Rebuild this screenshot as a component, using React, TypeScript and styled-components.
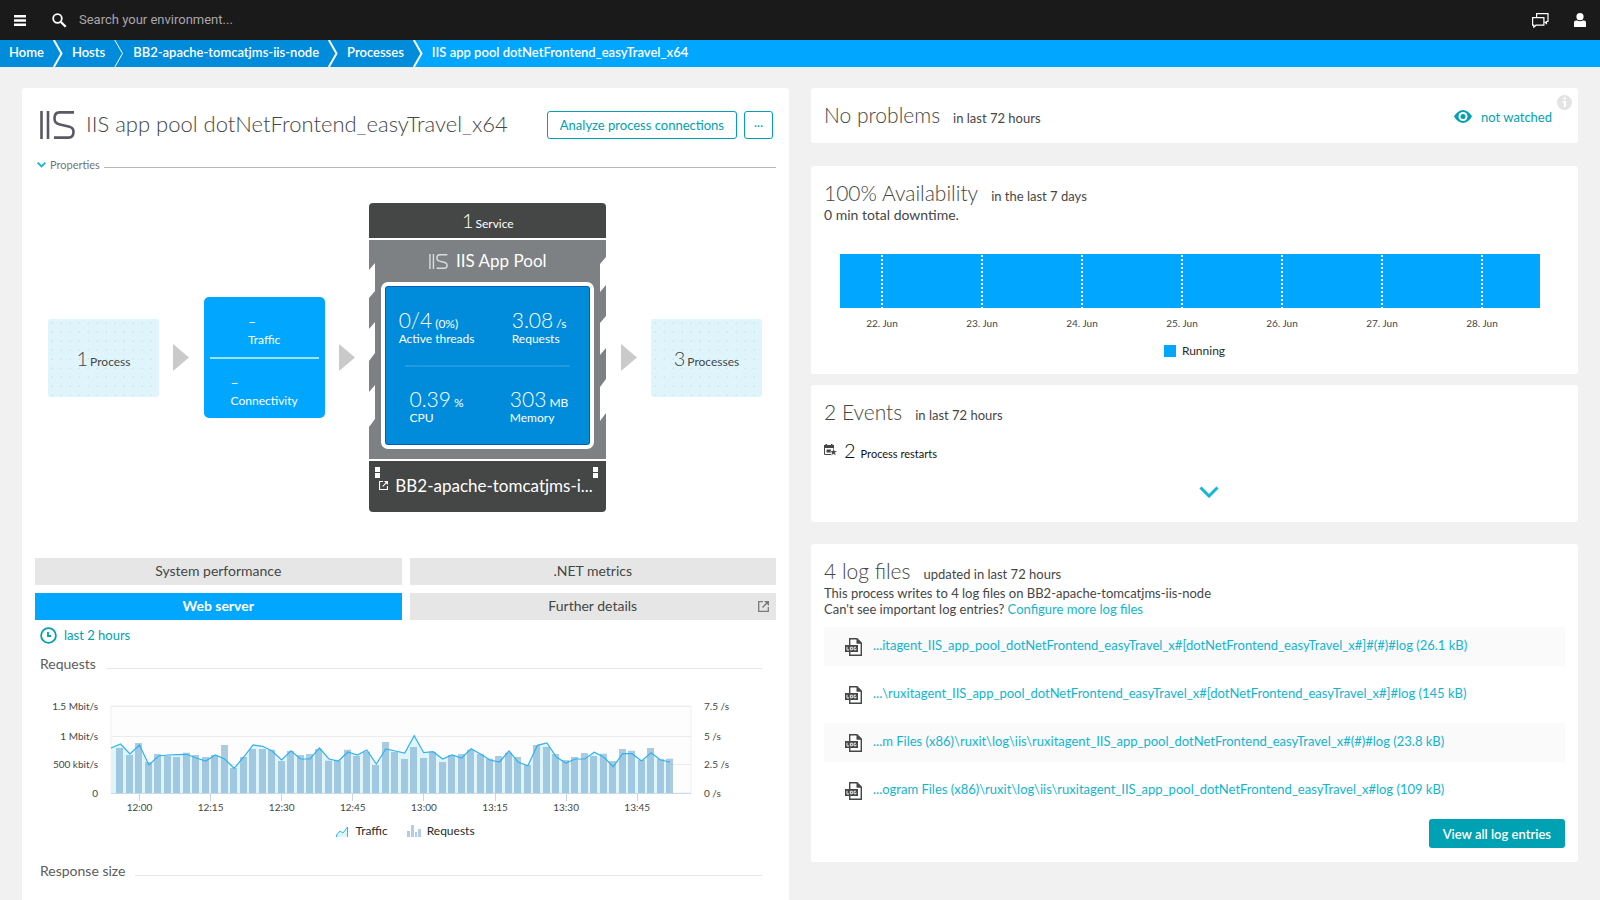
import React from "react";
import styled, { createGlobalStyle } from "styled-components";

const c = {
  ink: "#454646",
  blue: "#00a6ff",
  deep: "#008cdb",
  teal: "#00a1b2",
  link: "#12b4cf",
  line: "#e6e6e6",
  pale: "#e0f4fc",
  page: "#f1f1f1",
};

const GlobalStyle = createGlobalStyle`
  *, *::before, *::after { box-sizing: border-box; }
  html { scrollbar-width: none; }
  body {
    margin: 0;
    background: ${c.page};
    color: ${c.ink};
    font-family: Lato, "Open Sans", sans-serif;
    font-size: 13px;
    line-height: 16px;
  }
  button, input { font: inherit; color: inherit; }
  button { cursor: pointer; padding: 0; border: 0; background: none; }
  a { color: inherit; text-decoration: none; }
  h1, h2, h3, p, ul, ol, dl, dd { margin: 0; padding: 0; font-weight: 400; }
  ul, ol { list-style: none; }
  svg { display: block; flex: none; }
`;

/* ---------- Top bar ---------- */

const TopBar = styled.header`
  display: flex;
  align-items: center;
  height: 40px;
  padding: 0 14px;
  background: #1a1a1a;
  color: #fff;
`;

const SearchBox = styled.label`
  display: flex;
  flex: 1;
  align-items: center;
  gap: 12px;
  margin-left: 26px;
`;

const SearchInput = styled.input`
  flex: 1;
  padding: 0;
  border: 0;
  outline: 0;
  background: none;
  font-family: Roboto, sans-serif;
  font-size: 13px;
  &::placeholder { color: #aaa5aa; opacity: 1; }
`;

const BarActions = styled.div`
  display: flex;
  align-items: center;
  gap: 25px;
`;

/* ---------- Breadcrumbs ---------- */

const Crumbs = styled.ol`
  display: flex;
  height: 27px;
  background: ${c.blue};
  color: #fff;
  font-weight: 600;
`;

const Crumb = styled.li<{ $current?: boolean }>`
  display: flex;
  align-items: center;
  gap: 9px;
  padding-left: 9px;
  background: ${(p) => (p.$current ? c.blue : c.deep)};
  a { padding-bottom: 3px; }
`;

/* ---------- Page and cards ---------- */

const Page = styled.main`
  display: grid;
  grid-template-columns: minmax(0, 1fr) minmax(0, 1fr);
  gap: 22px;
  padding: 21px 22px;
`;

const MainCard = styled.section`
  padding: 23px 13px 40px;
  border-radius: 3px;
  background: #fff;
`;

const Side = styled.div``;

const Card = styled.section<{ $gap?: number }>`
  position: relative;
  margin-bottom: ${(p) => p.$gap ?? 0}px;
  padding: 14px 13px;
  border-radius: 3px;
  background: #fff;
`;

const CardHead = styled.div`
  display: flex;
  align-items: baseline;
  gap: 13px;
  height: 27px;
  line-height: 26px;
`;

const CardTitle = styled.h2`
  font-size: 21px;
  font-weight: 300;
`;

const CardNote = styled.p`
  font-size: 14px;
`;

const TitleRow = styled.div`
  display: flex;
  align-items: center;
  height: 28px;
  padding: 0 3px 0 5px;
  gap: 7px;
`;

const PageTitle = styled.h1`
  flex: 1;
  margin-left: 4px;
  padding-bottom: 3px;
  font-size: 22px;
  font-weight: 300;
  line-height: 28px;
  white-space: nowrap;
`;

const OutlineButton = styled.button`
  height: 28px;
  min-width: 29px;
  padding: 0 12px;
  border: 1px solid ${c.teal};
  border-radius: 3px;
  color: ${c.teal};
  &:last-child { padding: 0 0 6px; }
`;

const Properties = styled.button`
  display: flex;
  width: 100%;
  align-items: center;
  gap: 4px;
  margin-top: 18px;
  padding-left: 2px;
  font-size: 11px;
  line-height: 16px;
  color: #757575;
`;

const Rule = styled.span`
  flex: 1;
  height: 1px;
  background: #b7b7b7;
  ${Properties} & { margin-top: 4px; }
`;

/* ---------- Process diagram ---------- */

const Diagram = styled.div`
  display: flex;
  align-items: center;
  justify-content: space-between;
  padding: 0 14px 0 13px;
  margin: 30px 0 46px;
`;

const Neighbour = styled.button`
  display: flex;
  align-items: baseline;
  justify-content: center;
  gap: 2px;
  width: 111px;
  height: 78px;
  padding-top: 27px;
  border-radius: 3px;
  background: radial-gradient(circle, #d0e9f3 1px, transparent 1px) 0 0 / 9px 9px ${c.pale};
  font-size: 12px;
`;

const Count = styled.span`
  font-size: 20px;
  font-weight: 300;
  line-height: 24px;
`;

const LinkBox = styled.div`
  display: flex;
  flex-direction: column;
  width: 121px;
  height: 121px;
  padding: 0 6px;
  border-radius: 5px;
  background: ${c.blue};
  color: #fff;
  font-size: 12px;
`;

const LinkHalf = styled.div`
  display: flex;
  flex: 1;
  flex-direction: column;
  justify-content: center;
  align-items: center;
  padding-top: 6px;
  & + & { border-top: 2px solid #99e3fb; }
  dl { line-height: 16px; }
  dt { line-height: 20px; font-size: 14px; }
`;

const Chip = styled.div`
  display: flex;
  flex-direction: column;
  gap: 2px;
  width: 237px;
  color: #fff;
`;

const ChipTop = styled.button`
  display: flex;
  align-items: baseline;
  justify-content: center;
  gap: 2px;
  height: 35px;
  padding-top: 5px;
  border-radius: 4px 4px 0 0;
  background: ${c.ink};
  color: #fff;
  font-size: 12px;
`;

const ChipBody = styled.div`
  position: relative;
  height: 219px;
  padding: 0 12px;
  background: #7d8183;
`;

const Notches = styled.svg`
  position: absolute;
  inset: 0;
`;

const ChipName = styled.h3`
  display: flex;
  align-items: center;
  justify-content: center;
  gap: 8px;
  height: 42px;
  font-size: 17px;
`;

const Screen = styled.div`
  display: grid;
  grid-template-columns: 1fr 1fr;
  grid-template-rows: 79px 79px;
  justify-items: center;
  height: 167px;
  border: 4px solid #fff;
  border-radius: 7px;
  background: ${c.deep};
  box-shadow: inset 0 0 0 1px #0a5db0;
`;

const Metric = styled.dl`
  display: flex;
  flex-direction: column-reverse;
  justify-content: flex-end;
  padding-top: 25px;
  font-size: 12px;
  dd { line-height: 18px; }
  dt { line-height: 11px; }
  strong { font-size: 21px; font-weight: 300; }
`;

const ScreenRule = styled.span`
  position: absolute;
  left: 36px;
  right: 36px;
  top: 125px;
  height: 2px;
  background: #1f9be3;
`;

const ChipBottom = styled.div`
  position: relative;
  display: flex;
  align-items: center;
  gap: 7px;
  height: 51px;
  padding: 0 8px 2px 10px;
  border-radius: 0 0 4px 4px;
  background: ${c.ink};
  font-size: 17px;
  line-height: 22px;
  white-space: nowrap;
`;

const Pins = styled.span<{ $side: "left" | "right" }>`
  position: absolute;
  top: 6px;
  ${(p) => p.$side}: ${(p) => (p.$side === "left" ? 6 : 8)}px;
  width: 5px;
  height: 11px;
  border: solid #fff;
  border-width: 5px 0;
`;

/* ---------- Tabs and charts ---------- */

const Tabs = styled.div`
  display: grid;
  grid-template-columns: 1fr 1fr;
  gap: 8px;
`;

const Tab = styled.button<{ $active?: boolean }>`
  position: relative;
  height: 27px;
  padding-bottom: 2px;
  background: ${(p) => (p.$active ? c.blue : c.line)};
  color: ${(p) => (p.$active ? "#fff" : c.ink)};
  font-size: 14px;
  font-weight: ${(p) => (p.$active ? 700 : 400)};
  svg { position: absolute; right: 7px; top: 8px; }
`;

const Timeframe = styled.button`
  display: flex;
  align-items: center;
  gap: 7px;
  height: 26px;
  margin: 2px 0 0 5px;
  color: ${c.teal};
`;

const SectionHead = styled.div<{ $top: number }>`
  display: flex;
  align-items: flex-end;
  gap: 10px;
  margin: ${(p) => p.$top}px 14px 0 5px;
  line-height: 18px;
  h3 { font-size: 14px; color: #5c5c5c; }
  ${Rule} { margin-bottom: 4px; background: ${c.line}; }
`;

const ChartSvg = styled.svg`
  width: 100%;
  height: auto;
  margin-top: 7px;
  font-size: 10px;
  fill: ${c.ink};
`;

const Legend = styled.ul`
  display: flex;
  align-items: center;
  justify-content: center;
  gap: 19px;
  height: 18px;
  margin-top: 2px;
  font-size: 12px;
  color: #2b2b2b;
  li { display: flex; align-items: center; gap: 6px; }
`;

/* ---------- Side cards ---------- */

const Watch = styled.button`
  display: flex;
  align-items: center;
  gap: 9px;
  margin-left: auto;
  margin-right: 13px;
  color: ${c.teal};
`;

const Info = styled.button`
  position: absolute;
  top: 7px;
  right: 6px;
`;

const Timeline = styled.svg`
  width: 100%;
  height: auto;
  margin-top: 31px;
  font-size: 10px;
  fill: ${c.ink};
`;

const Swatch = styled.span`
  width: 12px;
  height: 12px;
  background: ${c.blue};
`;

const EventRow = styled.p`
  display: flex;
  align-items: baseline;
  gap: 5px;
  height: 24px;
  margin-top: 12px;
  font-size: 11px;
  line-height: 24px;
  color: #111;
  svg { margin-right: 2px; align-self: center; }
`;

const Expand = styled.button`
  display: block;
  margin: 22px auto 8px;
  padding: 2px 0 2px 28px;
`;

const TextLink = styled.a`
  color: ${c.link};
`;

const LogList = styled.ul`
  display: grid;
  gap: 9px;
  margin: 10px 0 9px;
`;

const LogItem = styled.li`
  display: flex;
  align-items: center;
  gap: 10px;
  height: 39px;
  padding: 0 21px;
  white-space: nowrap;
  &:nth-child(odd) { background: #fafafa; }
  a { padding-bottom: 3px; }
`;

const SolidButton = styled.button`
  display: block;
  height: 29px;
  margin-left: auto;
  padding: 0 14px;
  border-radius: 3px;
  background: ${c.teal};
  color: #fff;
  font-weight: 600;
`;

/* ---------- Icons ---------- */

const IisLogo = ({ width, height, color }: { width: number; height: number; color: string }) => (
  <svg width={width} height={height} viewBox="0 0 35 28" fill="none" stroke={color} strokeWidth="2.6" aria-hidden="true">
    <path d="M1.5 0V28M8 0V28" />
    <path d="M34 1.4H19.5C15.5 1.4 14.5 4 14.5 7.5S16 12.5 19 13.2L29.500 15.800C32.500 16.600 33.500 18 33.500 20.800C33.500 24.500 32.500 26.600 28.500 26.600H14" />
  </svg>
);

const External = ({ size, color }: { size: number; color: string }) => (
  <svg width={size} height={size} viewBox="0 0 11 11" fill="none" stroke={color} aria-hidden="true">
    <path d="M5 .7H.7V10.300H10.300V6" strokeWidth="1.300" />
    <path d="M4.500 6.500L9 2" strokeWidth="1.500" />
    <path d="M6 0H11V5Z" fill={color} stroke="none" />
  </svg>
);

const Arrow = () => (
  <svg width="16" height="27" aria-hidden="true">
    <path d="M0 0L16 13.500L0 27Z" fill="#cacaca" />
  </svg>
);

const ChevronDown = ({ width, stroke }: { width: number; stroke: number }) => (
  <svg width={width} height={width * 0.6} viewBox="0 0 20 12" fill="none" aria-hidden="true">
    <path d="M1.500 1.500L10 10L18.500 1.500" stroke="#12b9d3" strokeWidth={stroke} />
  </svg>
);

const Separator = ({ bold, last }: { bold?: boolean; last?: boolean }) => (
  <svg width="10" height="27" viewBox="0 0 10 27" fill="none" aria-hidden="true">
    {last && <path d="M0 0H10V27H0L8 13.500Z" fill={c.blue} />}
    <path d="M.800 0L8.500 13.500L.800 27" stroke="#fff" strokeWidth={bold ? 2 : 1} />
  </svg>
);

const LogIcon = () => (
  <svg width="18" height="18" viewBox="0 0 18 18" aria-hidden="true">
    <path d="M4.700 7V.800H12L16.300 5V17.200H4.700V14" fill="#fff" stroke={c.ink} strokeWidth="1.400" />
    <path d="M11.500 .500L16.800 5.700H11.500Z" fill={c.ink} />
    <rect y="7" width="13" height="7" fill={c.ink} />
    <path d="M2 8.700V12H4M5.300 9.200H7.300V11.800H5.300ZM11 9.200H9V11.800H11V10.600" fill="none" stroke="#fff" strokeWidth=".900" />
  </svg>
);

/* ---------- Data ---------- */

const X0 = 76;
const STEP = 9.475;
const BASE = 113;

// Heights above the chart's zero line, one per two minutes
const traffic = [
  45, 49, 39, 48, 28, 37, 38, 38.3, 38.7, 35, 32, 38, 34, 24.7, 36, 48, 46.7, 42, 33, 42.3, 34, 34, 45, 34, 32, 41, 38, 43,
  29, 44, 42, 40, 57.3, 40.3, 41.3, 34, 38, 35, 44.3, 39, 33, 31, 42, 30.7, 27.3, 47.7, 50, 36, 30, 34, 34, 40.7, 36, 26.3,
  39.3, 39.3, 32, 40.3, 33, 31,
];
const requests = [
  45, 38, 50, 31, 39, 37, 36, 40.3, 38, 36, 38, 48, 25, 36, 44, 44, 43.3, 32, 42, 38, 39, 44, 32.3, 32.3, 43.3, 37, 41.3,
  28, 51, 41, 34, 46, 35, 41, 31, 38, 39, 43.3, 39, 34.3, 37, 40.3, 36, 28, 48, 46, 39, 33, 36, 40, 37, 39.3, 32, 44, 42.3,
  33, 45, 34, 34.3,
];
const times = ["12:00", "12:15", "12:30", "12:45", "13:00", "13:15", "13:30", "13:45"];
const axis = [
  ["1.5 Mbit/s", "7.5 /s", 26],
  ["1 Mbit/s", "5 /s", 56],
  ["500 kbit/s", "2.5 /s", 84],
  ["0", "0 /s", 113],
] as const;
const days = ["22. Jun", "23. Jun", "24. Jun", "25. Jun", "26. Jun", "27. Jun", "28. Jun"];
const logs = [
  "...itagent_IIS_app_pool_dotNetFrontend_easyTravel_x#[dotNetFrontend_easyTravel_x#]#(#)#log (26.1 kB)",
  "...\\ruxitagent_IIS_app_pool_dotNetFrontend_easyTravel_x#[dotNetFrontend_easyTravel_x#]#log (145 kB)",
  "...m Files (x86)\\ruxit\\log\\iis\\ruxitagent_IIS_app_pool_dotNetFrontend_easyTravel_x#(#)#log (23.8 kB)",
  "...ogram Files (x86)\\ruxit\\log\\iis\\ruxitagent_IIS_app_pool_dotNetFrontend_easyTravel_x#log (109 kB)",
];
const metrics = [
  ["0/4", "(0%)", "Active threads"],
  ["3.08", "/s", "Requests"],
  ["0.39", "%", "CPU"],
  ["303", "MB", "Memory"],
];

const RequestsChart = () => {
  const points = traffic.map((v, i) => `${X0 + i * STEP},${BASE - v}`).join(" ");
  const end = X0 + (traffic.length - 1) * STEP;
  return (
    <ChartSvg viewBox="0 0 741 140" role="img" aria-label="Traffic and requests over the last 2 hours">
      <rect x={X0} y="26" width="580" height="87" fill="#fdfdfd" stroke="#efefef" />
      <polygon points={`${X0},${BASE} ${points} ${end},${BASE}`} fill={c.pale} />
      {axis.map(([left, right, y]) => (
        <g key={left}>
          <path d={`M${X0} ${y}.500H656`} stroke={y === 113 ? "#c4dae8" : "#ececec"} />
          <text x="63" y={y + 4} textAnchor="end">{left}</text>
          <text x="669" y={y + 4}>{right}</text>
        </g>
      ))}
      {requests.map((v, i) => (
        <rect key={i} x={Math.round(X0 + (i + 1) * STEP) - 4} y={BASE - v} width="7" height={v} fill="#7fb0d2" fillOpacity=".650" />
      ))}
      <polyline points={points} fill="none" stroke="#2fb2f0" strokeWidth="1.200" />
      {times.map((t, i) => (
        <g key={t}>
          <path d={`M${104 + Math.round(i * 71.1)}.500 113V121`} stroke="#c4d8e6" />
          <text x={104.5 + i * 71.1} y="131" textAnchor="middle">{t}</text>
        </g>
      ))}
    </ChartSvg>
  );
};

export default function App() {
  return (
    <>
      <GlobalStyle />
      <TopBar>
        <button aria-label="Menu">
          <svg width="12" height="11" fill="#fff"><path d="M0 0H12V2.500H0ZM0 4.200H12V6.700H0ZM0 8.400H12V10.900H0Z" /></svg>
        </button>
        <SearchBox>
          <svg width="15" height="15" viewBox="0 0 15 15" fill="none" stroke="#fff" aria-hidden="true">
            <circle cx="5.500" cy="5.500" r="4.300" strokeWidth="1.800" />
            <path d="M8.700 8.700L13.700 13.700" strokeWidth="2.300" />
          </svg>
          <SearchInput type="search" placeholder="Search your environment..." aria-label="Search your environment" />
        </SearchBox>
        <BarActions>
          <button aria-label="Messages">
            <svg width="17" height="15" viewBox="0 0 17 15" fill="none" stroke="#fff" strokeWidth="1.200">
              <path d="M4.600 4.500V.600H16V8.500H14.500V10.500L12.500 8.700" />
              <path d="M.600 4.600H11.900V12.200H4L1.800 14.200V12.200H.600Z" />
            </svg>
          </button>
          <button aria-label="Account">
            <svg width="12" height="14" viewBox="0 0 12 14" fill="#fff">
              <circle cx="6" cy="3.700" r="3.600" />
              <path d="M0 14V9.500Q0 7.500 2 7.500H3Q6 9 9 7.500H10Q12 7.500 12 9.500V14Z" />
            </svg>
          </button>
        </BarActions>
      </TopBar>

      <nav aria-label="Breadcrumb">
        <Crumbs>
          <Crumb><a href="#home">Home</a><Separator bold /></Crumb>
          <Crumb><a href="#hosts">Hosts</a><Separator /></Crumb>
          <Crumb><a href="#node">BB2-apache-tomcatjms-iis-node</a><Separator bold /></Crumb>
          <Crumb><a href="#processes">Processes</a><Separator bold last /></Crumb>
          <Crumb $current><a href="#pool" aria-current="page">IIS app pool dotNetFrontend_easyTravel_x64</a></Crumb>
        </Crumbs>
      </nav>

      <Page>
        <MainCard>
          <TitleRow>
            <IisLogo width={35} height={28} color="#595864" />
            <PageTitle>IIS app pool dotNetFrontend_easyTravel_x64</PageTitle>
            <OutlineButton>Analyze process connections</OutlineButton>
            <OutlineButton aria-label="More actions">...</OutlineButton>
          </TitleRow>
          <Properties>
            <ChevronDown width={9} stroke={4} />
            Properties
            <Rule />
          </Properties>

          <Diagram>
            <Neighbour><Count>1</Count> Process</Neighbour>
            <Arrow />
            <LinkBox>
              <LinkHalf><dl><dt>–</dt><dd>Traffic</dd></dl></LinkHalf>
              <LinkHalf><dl><dt>–</dt><dd>Connectivity</dd></dl></LinkHalf>
            </LinkBox>
            <Arrow />
            <Chip>
              <ChipTop><Count>1</Count> Service</ChipTop>
              <ChipBody>
                <Notches width="237" height="219" fill="#fff" aria-hidden="true">
                  <path d="M0 30L6 23V51L0 58ZM0 89L6 82V113L0 121ZM0 152L6 145V179L0 187Z" />
                  <path d="M237 17L231 24V52L237 45ZM237 76L231 83V115L237 108ZM237 139L231 147V181L237 173Z" />
                </Notches>
                <ChipName><IisLogo width={19} height={15} color="#dcdcdc" />IIS App Pool</ChipName>
                <Screen>
                  {metrics.map(([value, unit, label]) => (
                    <Metric key={label}>
                      <dt>{label}</dt>
                      <dd><strong>{value}</strong> {unit}</dd>
                    </Metric>
                  ))}
                </Screen>
                <ScreenRule />
              </ChipBody>
              <ChipBottom>
                <Pins $side="left" />
                <Pins $side="right" />
                <External size={9} color="#fff" />
                <a href="#host">BB2-apache-tomcatjms-i...</a>
              </ChipBottom>
            </Chip>
            <Arrow />
            <Neighbour><Count>3</Count> Processes</Neighbour>
          </Diagram>

          <Tabs>
            <Tab>System performance</Tab>
            <Tab>.NET metrics</Tab>
            <Tab $active>Web server</Tab>
            <Tab>Further details<External size={11} color="#7a7a7a" /></Tab>
          </Tabs>
          <Timeframe>
            <svg width="17" height="17" fill="none" stroke={c.teal} strokeWidth="1.800" aria-hidden="true">
              <circle cx="8.500" cy="8.500" r="7.400" />
              <path d="M8 5V9H11" />
            </svg>
            last 2 hours
          </Timeframe>

          <SectionHead $top={7}><h3>Requests</h3><Rule /></SectionHead>
          <RequestsChart />
          <Legend>
            <li>
              <svg width="13" height="11" aria-hidden="true">
                <path d="M0 11V9L4 5L6 7L12 1V11Z" fill={c.pale} />
                <path d="M.500 11V9L4 5L7 7L11.500 1V11" fill="none" stroke={c.blue} strokeOpacity=".800" />
              </svg>
              Traffic
            </li>
            <li>
              <svg width="14" height="12" fill="#b1cee2" aria-hidden="true">
                <path d="M0 6H3V12H0ZM4 0H7V12H4ZM8 7H10V12H8ZM11 4H14V12H11Z" />
              </svg>
              Requests
            </li>
          </Legend>
          <SectionHead $top={22}><h3>Response size</h3><Rule /></SectionHead>
        </MainCard>

        <Side>
          <Card $gap={23}>
            <CardHead>
              <CardTitle>No problems</CardTitle>
              <span>in last 72 hours</span>
              <Watch>
                <svg width="18" height="13" viewBox="0 0 18 13" aria-hidden="true">
                  <path d="M0 6.500Q4 0 9 0T18 6.500Q14 13 9 13T0 6.500Z" fill={c.teal} />
                  <circle cx="9" cy="6.500" r="4.500" fill="#fff" />
                  <circle cx="9" cy="6.500" r="2.500" fill={c.teal} />
                </svg>
                not watched
              </Watch>
            </CardHead>
            <Info aria-label="Information">
              <svg width="15" height="15">
                <circle cx="7.500" cy="7.500" r="7.500" fill="#e3e3e3" />
                <path d="M6.500 2.500H9V4.500H6.500ZM5.500 6H9V12H6.700V7.500H5.500Z" fill="#fff" />
              </svg>
            </Info>
          </Card>

          <Card $gap={11}>
            <CardHead>
              <CardTitle>100% Availability</CardTitle>
              <span>in the last 7 days</span>
            </CardHead>
            <CardNote>0 min total downtime.</CardNote>
            <Timeline viewBox="0 0 741 86" role="img" aria-label="Running for the last 7 days">
              <rect x="16" width="700" height="54" fill={c.blue} />
              {days.map((d, i) => (
                <g key={d}>
                  <path d={`M${58 + i * 100} 1V54`} stroke="#fff" strokeWidth="2" strokeDasharray="2 2" />
                  <text x={58 + i * 100} y="73" textAnchor="middle">{d}</text>
                </g>
              ))}
            </Timeline>
            <Legend><li><Swatch />Running</li></Legend>
          </Card>

          <Card $gap={22}>
            <CardHead>
              <CardTitle>2 Events</CardTitle>
              <span>in last 72 hours</span>
            </CardHead>
            <EventRow>
              <svg width="13" height="12" viewBox="0 0 13 12" aria-hidden="true">
                <path d="M0 1H1.500V0H3V1H7V0H8.500V1H10V4H0Z" fill={c.ink} />
                <path d="M.500 4V10.500H7M9.500 4V5" stroke={c.ink} fill="none" />
                <path d="M2.500 5.500H7V8.500H2.500Z" fill={c.ink} />
                <path d="M9.500 4.500L10.500 7H13L11 8.800L11.800 11.500L9.500 10L7.200 11.500L8 8.800L6 7H8.500Z" fill={c.ink} stroke="#fff" strokeWidth=".300" />
              </svg>
              <Count>2</Count> Process restarts
            </EventRow>
            <Expand aria-label="Show events"><ChevronDown width={20} stroke={3} /></Expand>
          </Card>

          <Card>
            <CardHead>
              <CardTitle>4 log files</CardTitle>
              <span>updated in last 72 hours</span>
            </CardHead>
            <p>This process writes to 4 log files on BB2-apache-tomcatjms-iis-node</p>
            <p>Can't see important log entries? <TextLink href="#configure">Configure more log files</TextLink></p>
            <LogList>
              {logs.map((name) => (
                <LogItem key={name}><LogIcon /><TextLink href="#log">{name}</TextLink></LogItem>
              ))}
            </LogList>
            <SolidButton>View all log entries</SolidButton>
          </Card>
        </Side>
      </Page>
    </>
  );
}
